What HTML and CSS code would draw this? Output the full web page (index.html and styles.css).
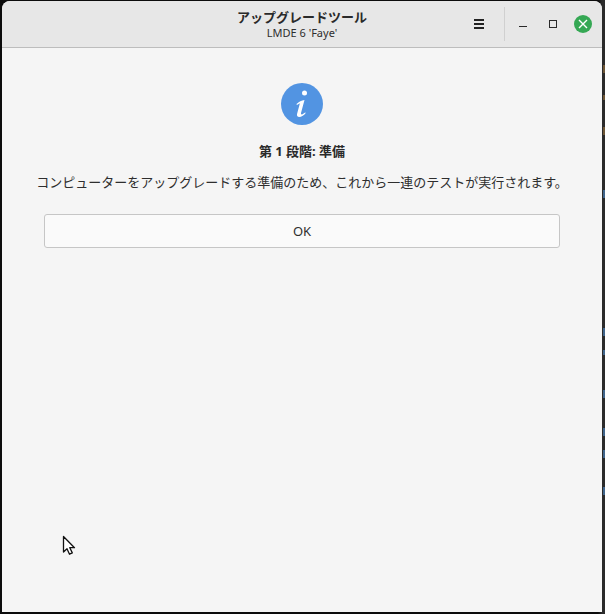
FILE: index.html
```html
<!DOCTYPE html>
<html lang="ja">
<head>
<meta charset="utf-8">
<title>アップグレードツール</title>
<link rel="stylesheet" href="styles.css">
</head>
<body>
<div class="window">
  <header class="titlebar">
    <div class="titles">
      <div class="title">アップグレードツール</div>
      <div class="subtitle">LMDE 6 'Faye'</div>
    </div>
    <div class="controls">
      <svg class="menu" width="10" height="10" viewBox="0 0 10 10"><path d="M0 1h10M0 5h10M0 9h10" stroke="#222" stroke-width="2" fill="none"/></svg>
      <span class="sep"></span>
      <svg class="ctl min" width="10" height="10" viewBox="0 0 10 10"><path d="M1 7.500h8" stroke="#2a2a2a" stroke-width="1" fill="none"/></svg>
      <svg class="ctl max" width="10" height="10" viewBox="0 0 10 10"><rect x="1.500" y="1.500" width="7" height="7" stroke="#2a2a2a" stroke-width="1" fill="none"/></svg>
      <svg class="ctl close" width="18" height="18" viewBox="0 0 18 18"><circle cx="9" cy="9" r="9" fill="#35a854"/><path d="M5 5l8 8M13 5l-8 8" stroke="#fff" stroke-width="1.400" fill="none"/></svg>
    </div>
  </header>
  <main class="content">
    <svg class="info" width="42" height="42" viewBox="0 0 42 42"><circle cx="21" cy="21" r="21" fill="#5294e2"/><circle cx="23.500" cy="10" r="2.500" fill="#fff"/><path d="M15.500 21c2.500-2.300 5-3.700 8-4l-3.500 13c-.3 1.300.5 1.700 1.500 1.200l3-2-.2 1.500c-2 2-3.800 3-6 3.200-2 0-2.700-1.200-2.200-3.200l2.800-10.500-3 1.700z" fill="#fff"/></svg>
    <h1 class="heading">第 1 段階: 準備</h1>
    <p class="message">コンピューターをアップグレードする準備のため、これから一連のテストが実行されます。</p>
    <button class="ok" type="button">OK</button>
    <svg class="pointer" width="16" height="22" viewBox="0 0 16 22"><path d="M1.500 1.500v15.500l3.500-3.300 2.500 5.500 2.800-1.300-2.500-5.200h4.700z" fill="#fff" stroke="#111" stroke-width="1.300" stroke-linejoin="round"/></svg>
  </main>
</div>
<div class="specks">
  <i class="sp amber s1"></i><i class="sp amber s2"></i><i class="sp amber s3"></i><i class="sp blue s4"></i><i class="sp blue s5"></i><i class="sp blue s6"></i><i class="sp blue s7"></i><i class="sp blue s8"></i><i class="sp blue s9"></i><i class="sp blue s10"></i>
</div>
</body>
</html>
```
FILE: styles.css
```css
* { box-sizing: border-box; }
html, body { margin: 0; height: 100%; }
body {
  background: linear-gradient(to right, #0c0c0c 0, #0c0c0c 598px, #2b2b2b 602px);
  padding: 1px 3px 2px 2px;
  overflow: hidden;
  font-family: "Noto Sans", "Noto Sans CJK JP", sans-serif;
  color: #2a2a2a;
}
.window {
  height: 611px;
  background: #f5f5f5;
  border-radius: 8px 8px 0 0;
  display: flex;
  flex-direction: column;
  overflow: hidden;
}
.titlebar {
  position: relative;
  height: 47px;
  flex: none;
  background: #e7e7e7;
  border-bottom: 1px solid #bdbdbd;
  display: flex;
  justify-content: center;
}
.titles { text-align: center; padding-top: 8px; }
.title { font-size: 13px; font-weight: 700; line-height: 17px; color: #2a2a2a; }
.subtitle { font-size: 11px; line-height: 13px; color: #2e2e2e; }
.controls {
  position: absolute;
  right: 10px;
  top: 6px;
  height: 34px;
  display: flex;
  align-items: center;
}
.menu { margin-right: 20px; }
.sep { width: 1px; height: 34px; background: #d0d0d0; margin-right: 13px; }
.ctl.min { margin-right: 20px; }
.ctl.max { margin-right: 16px; }
.content {
  position: relative;
  flex: 1;
  display: flex;
  flex-direction: column;
  align-items: center;
  padding-top: 35px;
}
.info { display: block; }
.heading { margin: 16px 0 0; font-size: 13px; line-height: 20px; font-weight: 700; color: #2a2a2a; }
.message { margin: 11px 0 0; font-size: 13px; line-height: 20px; white-space: nowrap; color: #2e2e2e; }
.ok {
  margin-top: 22px;
  width: 516px;
  height: 34px;
  background: #fafafa;
  border: 1px solid #c6c6c6;
  border-radius: 3px;
  font: 13px "Noto Sans", sans-serif;
  color: #2e2e2e;
}
.pointer { position: absolute; left: 60px; top: 487px; }
.specks { position: absolute; left: 603px; top: 0; }
.sp { position: absolute; left: 0; width: 2px; height: 8px; opacity: .7; }
.amber { background: #8a6a3c; }
.blue { background: #4a7fb5; }
.s1 { top: 65px; } .s2 { top: 95px; height: 5px; } .s3 { top: 127px; }
.s4 { top: 190px; } .s5 { top: 328px; } .s6 { top: 350px; height: 5px; } .s7 { top: 390px; } .s8 { top: 428px; } .s9 { top: 450px; } .s10 { top: 487px; }
```
